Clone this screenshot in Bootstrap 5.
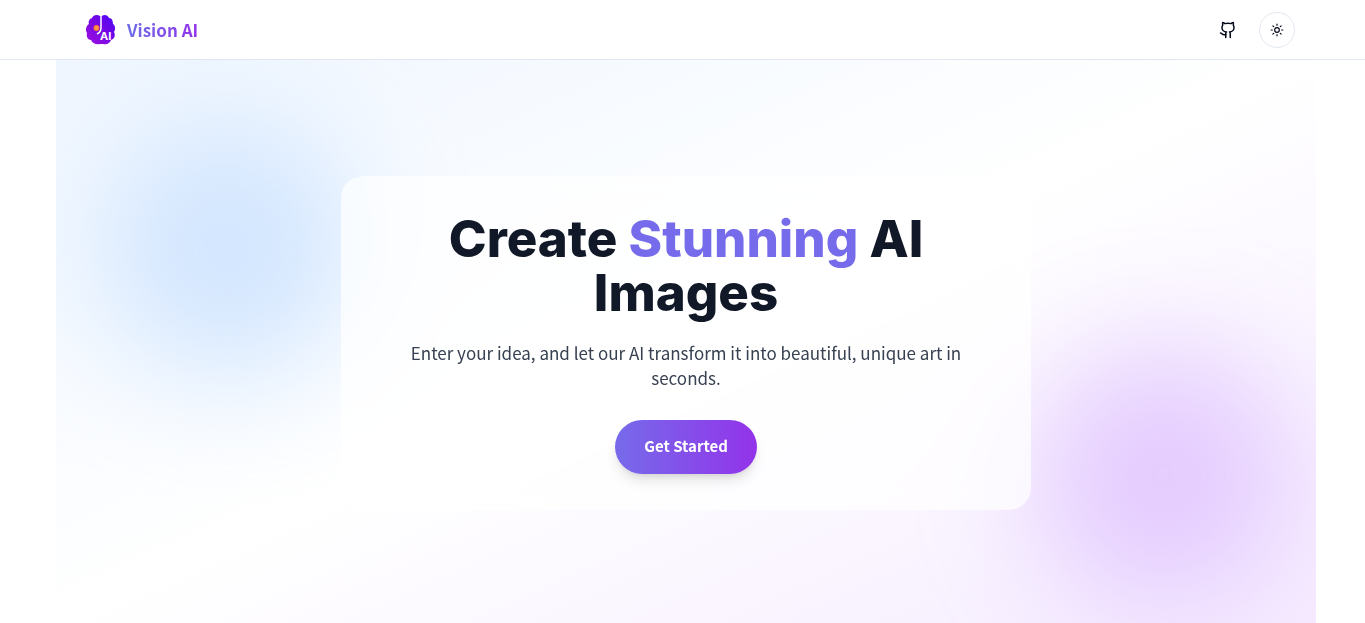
<!DOCTYPE html>
<html lang="en">
<head>
<meta charset="utf-8">
<meta name="viewport" content="width=device-width, initial-scale=1">
<title>Vision AI</title>
<link href="https://cdn.jsdelivr.net/npm/bootstrap@5.3.0/dist/css/bootstrap.min.css" rel="stylesheet">
<style>
  body { font-family: "Noto Sans CJK SC", "Open Sans", sans-serif; color: #111827; }
  .site-header { height: 60px; border-bottom: 1px solid #e2e8f0; }
  .page-frame { margin-left: 56px; margin-right: 49px; }
  .header-inner { padding: 0 21px 0 29px; }
  .brand-link { gap: 10px; }
  .header-actions { gap: 22px; }
  .brand-name { font-size: 17px; font-weight: 600; background: linear-gradient(90deg, #6c6ee9, #9333ea); -webkit-background-clip: text; background-clip: text; color: transparent; }
  .theme-btn { width: 36px; height: 36px; border: 1px solid #e2e8f0; background: #fff; color: #020817; }
  .gh-link { color: #020817; }
  .hero { min-height: calc(100vh - 60px); padding-top: 2px; background: linear-gradient(to bottom right, #eff6ff, #fff, #f5ebff); }
  .glow { width: 258px; height: 258px; border-radius: 50%; filter: blur(58px); }
  .glow-blue { left: 43px; top: 61px; background: #bfdbfe; opacity: .65; }
  .glow-violet { right: 25px; bottom: 19px; background: #d8b4fe; opacity: .62; }
  .hero-card { max-width: 690px; padding: 36px 58px; border-radius: 22px; background: rgba(255,255,255,.7); backdrop-filter: blur(11px); }
  .hero-title { font-family: Inter, "Open Sans", sans-serif; font-size: 51px; line-height: 54px; font-weight: 800; margin-bottom: 20px; }
  .accent { color: #766bea; }
  .hero-text { font-size: 17px; line-height: 25px; color: #374151; margin-bottom: 30px; }
  .start-btn { height: 54px; padding: 0 29px; font-size: 15px; font-weight: 600; color: #fff; border: 0; background: linear-gradient(90deg, #766bea, #9333ea); box-shadow: 0 9px 14px -3px rgba(0,0,0,.12), 0 4px 6px -4px rgba(0,0,0,.12); }
</style>
</head>
<body class="overflow-x-hidden">
<header class="site-header bg-white">
  <div class="page-frame h-100">
    <nav class="header-inner h-100 d-flex align-items-center justify-content-between">
      <a href="#" class="brand-link d-flex align-items-center text-decoration-none">
        <svg width="32" height="32" viewBox="0 0 32 32" aria-hidden="true">
          <defs><linearGradient id="brain" x1="0" y1="1" x2="1" y2="0"><stop offset="0" stop-color="#a010e0"/><stop offset=".5" stop-color="#7808e4"/><stop offset="1" stop-color="#4b05f5"/></linearGradient>
          <radialGradient id="spark"><stop offset="0" stop-color="#ffb43c"/><stop offset="1" stop-color="#ff6a3d"/></radialGradient></defs>
          <path fill="url(#brain)" d="M15 2C12 0 8 1 7 4 4 5 3 8 4 10 1 12 0 16 2 19 1 23 3 26 6 26c1 3 5 5 9 4h3c4 1 7-1 8-4 3-1 5-4 3-8 2-3 1-7-1-8 0-3-1-6-4-6-1-3-5-4-7-2z"/>
          <path d="M16 1v13c0 4-2 5-4 6" fill="none" stroke="#fff" stroke-width="1.500"/>
          <circle cx="11.500" cy="14" r="3" fill="url(#spark)"/>
          <text x="15" y="26" font-family="Inter, sans-serif" font-size="11" font-weight="700" fill="#fff">AI</text>
        </svg>
        <span class="brand-name">Vision AI</span>
      </a>
      <div class="header-actions d-flex align-items-center">
        <a href="#" class="gh-link d-flex" aria-label="GitHub">
          <svg width="18" height="18" viewBox="0 0 24 24" fill="none" stroke="currentColor" stroke-width="2" stroke-linecap="round" stroke-linejoin="round"><path d="M15 22v-4a4.800 4.800 0 0 0-1-3.500c3 0 6-2 6-5.500.08-1.250-.27-2.480-1-3.500.28-1.150.28-2.350 0-3.500 0 0-1 0-3 1.500-2.640-.5-5.360-.5-8 0C6 2 5 2 5 2c-.3 1.150-.3 2.350 0 3.500A5.403 5.403 0 0 0 4 9c0 3.500 3 5.500 6 5.500-.39.49-.68 1.050-.85 1.650-.17.6-.22 1.230-.15 1.850v4"/><path d="M9 18c-4.510 2-5-2-7-2"/></svg>
        </a>
        <button type="button" class="theme-btn rounded-circle p-0 d-flex align-items-center justify-content-center" aria-label="Toggle theme">
          <svg width="14" height="14" viewBox="0 0 24 24" fill="none" stroke="currentColor" stroke-width="2" stroke-linecap="round" stroke-linejoin="round"><circle cx="12" cy="12" r="4"/><path d="M12 2v2M12 20v2M4.930 4.930l1.410 1.410M17.660 17.660l1.410 1.410M2 12h2M20 12h2M6.340 17.660l-1.410 1.410M19.070 4.930l-1.410 1.410"/></svg>
        </button>
      </div>
    </nav>
  </div>
</header>
<main class="page-frame">
  <section class="hero position-relative overflow-hidden d-flex align-items-center justify-content-center">
    <div class="glow glow-blue position-absolute"></div>
    <div class="glow glow-violet position-absolute"></div>
    <div class="hero-card position-relative text-center w-100">
      <h1 class="hero-title">Create <span class="accent">Stunning</span> AI Images</h1>
      <p class="hero-text">Enter your idea, and let our AI transform it into beautiful, unique art in seconds.</p>
      <button type="button" class="start-btn rounded-pill">Get Started</button>
    </div>
  </section>
</main>
<script src="https://cdn.jsdelivr.net/npm/bootstrap@5.3.0/dist/js/bootstrap.bundle.min.js"></script>
</body>
</html>
